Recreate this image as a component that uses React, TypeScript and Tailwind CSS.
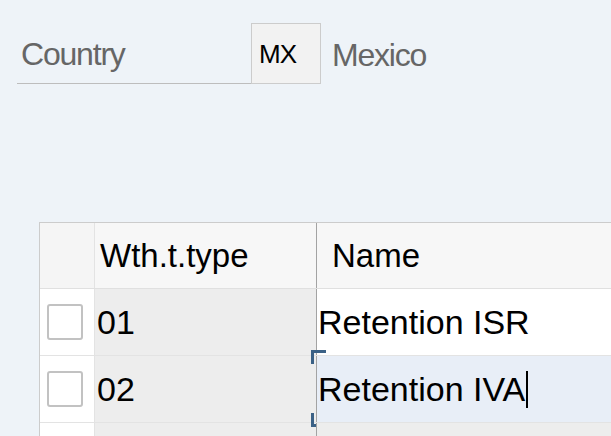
import React from 'react'

const font = { fontFamily: '"Liberation Sans", Arial, sans-serif' }

function Checkbox() {
  return <div className="w-[36px] h-[36px] rounded-[3px] border-2 border-[#c2c2c2] bg-white" />
}

interface RowProps {
  code?: string
  name?: string
  nameBg: string
  focused?: boolean
  last?: boolean
}

function Row({ code, name, nameBg, focused, last }: RowProps) {
  return (
    <div className={`flex ${last ? 'h-[40px]' : 'h-[67px] border-b border-[#e3e3e3]'}`}>
      <div className="w-[54px] shrink-0 bg-white flex items-center pl-[7px]">
        {!last && <Checkbox />}
      </div>
      <div className="w-[222px] shrink-0 bg-[#ededed] border-l border-[#e3e3e3] flex items-center pl-[2px] text-[34px] text-black">
        {code}
      </div>
      <div className={`relative flex-1 border-l border-[#a3a3a3] flex items-center pl-[1px] text-[34px] text-black ${nameBg}`}>
        {name}
        {focused && (
          <>
            <span className="inline-block w-[2px] h-[37px] bg-black ml-[1px]" />
            <div className="absolute left-[-6px] top-[-6px] w-[15px] h-[14px] border-l-[3px] border-t-[3px] border-[#3b6186]" />
            <div className="absolute left-[-6px] bottom-[-5px] w-[15px] h-[14px] border-l-[3px] border-b-[3px] border-[#3b6186]" />
          </>
        )}
      </div>
    </div>
  )
}

export default function App() {
  return (
    <div className="w-[611px] h-[436px] overflow-hidden bg-[#eef3f8]" style={font}>
      <div className="flex items-center h-[61px] mt-[23px] ml-[17px]">
        <div className="w-[234px] h-full border-b border-[#bdbdbd] flex items-center pl-[4px] pt-[2px] text-[32px] tracking-[-1.2px] text-[#666666]">
          Country
        </div>
        <div className="w-[70px] h-full border border-[#cccccc] bg-[#f2f2f2] flex items-center pl-[7px] pt-[2px] text-[26px] tracking-[-1px] text-black">
          MX
        </div>
        <div className="pl-[11px] pt-[2px] text-[32px] tracking-[-1.2px] text-[#666666]">Mexico</div>
      </div>

      <div className="ml-[39px] mt-[138px] w-[700px] border-l border-t border-[#cccccc]">
        <div className="flex h-[66px] border-b border-[#e0e0e0] bg-[#f7f7f7]">
          <div className="w-[54px] shrink-0 bg-[#f5f5f5]" />
          <div className="w-[222px] shrink-0 border-l border-[#e3e3e3] flex items-center pl-[5px] text-[33px] text-black">
            Wth.t.type
          </div>
          <div className="flex-1 border-l border-[#a3a3a3] flex items-center pl-[15px] text-[33px] text-black">
            Name
          </div>
        </div>
        <Row code="01" name="Retention ISR" nameBg="bg-white" />
        <Row code="02" name="Retention IVA" nameBg="bg-[#e8eef7]" focused />
        <Row nameBg="bg-[#ededed]" last />
      </div>
    </div>
  )
}
